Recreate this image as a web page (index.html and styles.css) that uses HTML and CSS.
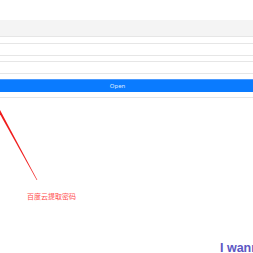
FILE: index.html
```html
<!DOCTYPE html>
<html lang="en">
<head>
    <meta charset="UTF-8">
    <meta name="viewport" content="width=device-width, initial-scale=1.0">
    <title>Open</title>
    <link rel="stylesheet" href="styles.css">
</head>
<body>
    <div class="page">
        <div class="topbar"></div>
        <div class="form">
            <input type="text" class="field">
            <input type="text" class="field">
            <button class="open-btn">Open</button>
            <div class="field last"></div>
        </div>

        <!-- tapered pointer line -->
        <svg class="arrow" width="60" height="90" viewBox="0 0 60 90">
            <polygon points="-3,-1 -0.6,-1 37.3,70 36.7,70" fill="#f01c1c"/>
        </svg>
        <p class="hint">百度云提取密码</p>

        <p class="wanna">I wanna</p>
    </div>
</body>
</html>
```

FILE: styles.css
```css
html, body {
    margin: 0;
    padding: 0;
    background-color: #fff;
    overflow: hidden;
}
.page {
    position: relative;
    box-sizing: border-box;
    width: 253px;
    height: 253px;
    padding-top: 20px;
    overflow: hidden;
    font-family: "Noto Sans", "Noto Sans CJK SC", sans-serif;
}
.topbar {
    height: 16px;
    background-color: #f4f4f4;
    border-bottom: 1px solid #e6e6e6;
}
.form {
    display: flex;
    flex-direction: column;
    gap: 5px;
    padding-top: 6px;
}
.field {
    display: block;
    box-sizing: border-box;
    width: 100%;
    height: 13px;
    margin: 0;
    padding: 0;
    border: none;
    border-top: 1px solid #e6e6e6;
    border-bottom: 1px solid #e6e6e6;
    background: #fff;
}
.open-btn {
    display: block;
    width: 100%;
    height: 13px;
    margin: 0;
    padding: 0 18px 0 0;
    border: none;
    border-top: 1px solid #4d9bff;
    background-color: #0a7bff;
    color: #dfeaff;
    font-family: "Noto Sans", sans-serif;
    font-size: 6px;
    line-height: 12px;
}
.field.last {
    height: 40px;
    border-bottom: none;
}
.arrow {
    position: absolute;
    left: 0;
    top: 110px;
}
.hint {
    position: absolute;
    left: 27px;
    top: 192px;
    margin: 0;
    font-size: 7px;
    line-height: 10px;
    color: #ff5050;
}
.wanna {
    position: absolute;
    left: 220px;
    top: 241px;
    margin: 0;
    font-family: "Liberation Sans", sans-serif;
    font-weight: bold;
    font-size: 12.5px;
    line-height: 14px;
    color: #5d58c4;
    white-space: nowrap;
}
```
